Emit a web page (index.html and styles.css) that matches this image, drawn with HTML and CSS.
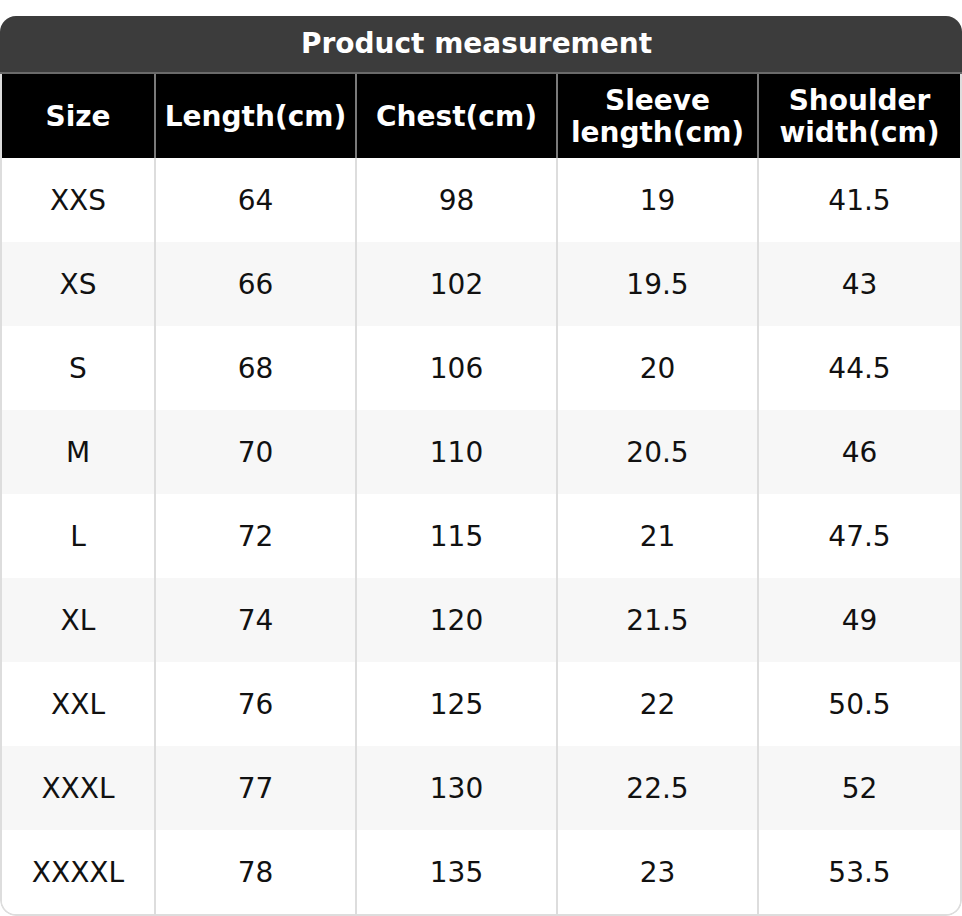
FILE: index.html
```html
<!DOCTYPE html>
<html lang="en">
<head>
<meta charset="utf-8">
<title>Product measurement</title>
<link rel="stylesheet" href="styles.css">
</head>
<body>
<div class="sheet">
  <div class="title">Product measurement</div>
  <div class="table-wrap">
    <table class="sizes">
      <colgroup>
        <col class="c-size">
        <col class="c-val">
        <col class="c-val">
        <col class="c-val">
        <col class="c-val">
      </colgroup>
      <thead>
        <tr>
          <th>Size</th>
          <th>Length(cm)</th>
          <th>Chest(cm)</th>
          <th>Sleeve<br>length(cm)</th>
          <th>Shoulder<br>width(cm)</th>
        </tr>
      </thead>
      <tbody>
        <tr><td>XXS</td><td>64</td><td>98</td><td>19</td><td>41.5</td></tr>
        <tr><td>XS</td><td>66</td><td>102</td><td>19.5</td><td>43</td></tr>
        <tr><td>S</td><td>68</td><td>106</td><td>20</td><td>44.5</td></tr>
        <tr><td>M</td><td>70</td><td>110</td><td>20.5</td><td>46</td></tr>
        <tr><td>L</td><td>72</td><td>115</td><td>21</td><td>47.5</td></tr>
        <tr><td>XL</td><td>74</td><td>120</td><td>21.5</td><td>49</td></tr>
        <tr><td>XXL</td><td>76</td><td>125</td><td>22</td><td>50.5</td></tr>
        <tr><td>XXXL</td><td>77</td><td>130</td><td>22.5</td><td>52</td></tr>
        <tr><td>XXXXL</td><td>78</td><td>135</td><td>23</td><td>53.5</td></tr>
      </tbody>
    </table>
  </div>
</div>
</body>
</html>
```

FILE: styles.css
```css
html, body {
  margin: 0;
  padding: 0;
  background: #ffffff;
}

body {
  font-family: "DejaVu Sans", "Liberation Sans", sans-serif;
  color: #111111;
}

.sheet {
  width: 962px;
  margin-top: 16px;
  border-radius: 16px;
  overflow: hidden;
}

.title {
  height: 56px;
  padding-right: 9px;
  background: #3c3c3c;
  color: #ffffff;
  font-weight: bold;
  font-size: 28px;
  line-height: 56px;
  text-align: center;
  border-bottom: 2px solid #6a6a6a;
}

.table-wrap {
  border: 2px solid #dddddd;
  border-top: 0;
  border-radius: 0 0 16px 16px;
  overflow: hidden;
}

.sizes {
  width: 958px;
  table-layout: fixed;
  border-collapse: separate;
  border-spacing: 0;
}

.c-size { width: 154px; }
.c-val { width: 201px; }

.sizes th,
.sizes td {
  padding: 2px 0 0;
  text-align: center;
  vertical-align: middle;
  border-right: 2px solid #dddddd;
}

.sizes th:last-child,
.sizes td:last-child {
  border-right: 0;
}

.sizes th {
  height: 82px;
  background: #000000;
  color: #ffffff;
  font-size: 28px;
  font-weight: bold;
  line-height: 32px;
  border-right-color: #7a7a7a;
}

.sizes td {
  height: 82px;
  font-size: 28px;
  line-height: 32px;
  background: #ffffff;
}

.sizes tbody tr:nth-child(even) td {
  background: #f7f7f7;
}
```
